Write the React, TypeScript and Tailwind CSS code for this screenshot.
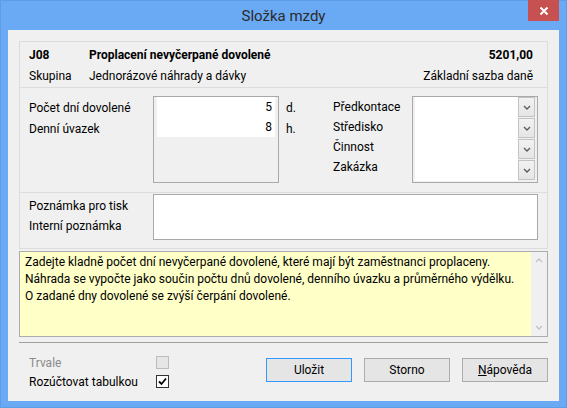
import React from "react";

const font = { fontFamily: 'Roboto, "Noto Sans", sans-serif' };

function Chevron({ up = false, color = "#5a5a5a" }: { up?: boolean; color?: string }) {
  return (
    <svg width="8" height="5" viewBox="0 0 8 5" className="block">
      <path
        d={up ? "M1 4 L4 1 L7 4" : "M1 1 L4 4 L7 1"}
        fill="none"
        stroke={color}
        strokeWidth="1.3"
      />
    </svg>
  );
}

function ComboBtn() {
  return (
    <div className="h-[20px] w-[17px] border border-[#c3c3c3] bg-gradient-to-b from-[#f2f2f2] to-[#e5e5e5] flex items-center justify-center">
      <Chevron />
    </div>
  );
}

function Button({ children, primary = false }: { children: React.ReactNode; primary?: boolean }) {
  return (
    <div
      className={
        "w-[86px] h-[24px] flex items-center justify-center text-[12px] text-black bg-[#e5e5e5] border " +
        (primary ? "border-[#3399ff]" : "border-[#acacac]")
      }
    >
      {children}
    </div>
  );
}

export default function App() {
  return (
    <div
      className="w-[567px] h-[408px] bg-[#6aaaf5] border border-[#5a9ee8] flex flex-col text-[12px] text-black"
      style={font}
    >
      {/* Title bar */}
      <div className="relative h-[29px] flex items-center justify-center shrink-0">
        <span className="text-[15px] text-[#2b2b2b] mt-[1px]">Složka mzdy</span>
        <div className="absolute right-[7px] top-[-1px] w-[31px] h-[21px] bg-[#c75050] flex items-center justify-center">
          <svg width="10" height="10" viewBox="0 0 10 10">
            <path d="M1.5 1.5 L8.5 8.5 M8.5 1.5 L1.5 8.5" stroke="white" strokeWidth="2" />
          </svg>
        </div>
      </div>

      {/* Client */}
      <div className="mx-[7px] mb-[6px] flex-1 bg-[#f0f0f0] px-[11px] pt-[11px] flex flex-col">
        {/* Box 1 */}
        <div className="h-[47px] border border-[#dcdcdc] pt-[2px] pl-[9px] pr-[14px]">
          <div className="h-[21px] flex items-center font-bold">
            <span className="w-[60px]">J08</span>
            <span className="flex-1">Proplacení nevyčerpané dovolené</span>
            <span>5201,00</span>
          </div>
          <div className="h-[21px] flex items-center">
            <span className="w-[60px]">Skupina</span>
            <span className="flex-1">Jednorázové náhrady a dávky</span>
            <span>Základní sazba daně</span>
          </div>
        </div>

        {/* Box 2 */}
        <div className="h-[105px] border-x border-b border-[#dcdcdc] pl-[9px] pt-[8px] flex">
          <div className="w-[124px] flex flex-col pt-[1px]">
            <div className="h-[21px] flex items-center">Počet dní dovolené</div>
            <div className="h-[21px] flex items-center">Denní úvazek</div>
          </div>
          <div className="w-[126px] h-[87px] border border-[#a9a9a9] px-[3px] pt-0">
            <div className="bg-white h-[40px] flex flex-col pr-[3px]">
              <div className="h-[20px] flex items-center justify-end">5</div>
              <div className="h-[20px] flex items-center justify-end">8</div>
            </div>
          </div>
          <div className="w-[54px] pl-[7px] flex flex-col pt-[1px]">
            <div className="h-[21px] flex items-center">d.</div>
            <div className="h-[21px] flex items-center">h.</div>
          </div>
          <div className="w-[79px] flex flex-col pt-[1px]">
            <div className="h-[20px] flex items-center">Předkontace</div>
            <div className="h-[20px] flex items-center">Středisko</div>
            <div className="h-[20px] flex items-center">Činnost</div>
            <div className="h-[20px] flex items-center">Zakázka</div>
          </div>
          <div className="w-[126px] h-[87px] border border-[#a9a9a9] flex pl-[2px] pr-[2px]">
            <div className="flex-1 bg-white h-[84px]"></div>
            <div className="flex flex-col gap-[1px] pt-0">
              <ComboBtn />
              <ComboBtn />
              <ComboBtn />
              <ComboBtn />
            </div>
          </div>
        </div>

        {/* Box 3 */}
        <div className="h-[56px] border-x border-b border-[#dcdcdc] pl-[9px] pt-[1px] flex">
          <div className="w-[124px] flex flex-col pt-[2px]">
            <div className="h-[20px] flex items-center">Poznámka pro tisk</div>
            <div className="h-[20px] flex items-center">Interní poznámka</div>
          </div>
          <div className="w-[385px] h-[46px] border border-[#a9a9a9] bg-white"></div>
        </div>

        {/* Yellow help */}
        <div className="mt-[2px] h-[86px] border border-[#abadb3] bg-[#ffffc8] flex">
          <div className="flex-1 pl-[5px] pt-[2px] leading-[17px]">
            <div>Zadejte kladně počet dní nevyčerpané dovolené, které mají být zaměstnanci proplaceny.</div>
            <div>Náhrada se vypočte jako součin počtu dnů dovolené, denního úvazku a průměrného výdělku.</div>
            <div>O zadané dny dovolené se zvýší čerpání dovolené.</div>
          </div>
          <div className="w-[16px] bg-[#f0f0f0] flex flex-col items-center justify-between py-[6px]">
            <Chevron up color="#c2c2c2" />
            <Chevron color="#c2c2c2" />
          </div>
        </div>

        {/* Separator */}
        <div className="mt-[5px] h-px bg-[#a0a0a0]"></div>

        {/* Bottom */}
        <div className="flex pl-[10px] pt-[10px]">
          <div className="w-[137px] flex flex-col">
            <div className="h-[19px] flex items-center text-[#8a8a8a]">Trvale</div>
            <div className="h-[19px] flex items-center">Rozúčtovat tabulkou</div>
          </div>
          <div className="flex flex-col">
            <div className="h-[19px] flex items-center">
              <div className="w-[13px] h-[13px] border border-[#bcbcbc] bg-[#e6e6e6]"></div>
            </div>
            <div className="h-[19px] flex items-center">
              <div className="w-[13px] h-[13px] border border-[#333333] bg-white flex items-center justify-center">
                <svg width="9" height="9" viewBox="0 0 9 9">
                  <path d="M1 4.5 L3.5 7 L8 1.5" fill="none" stroke="#000" strokeWidth="1.8" />
                </svg>
              </div>
            </div>
          </div>
          <div className="ml-[97px] mt-[5px] flex gap-[12px]">
            <Button primary>Uložit</Button>
            <Button>Storno</Button>
            <Button>
              <span>
                <span className="underline">N</span>ápověda
              </span>
            </Button>
          </div>
        </div>
      </div>
    </div>
  );
}
